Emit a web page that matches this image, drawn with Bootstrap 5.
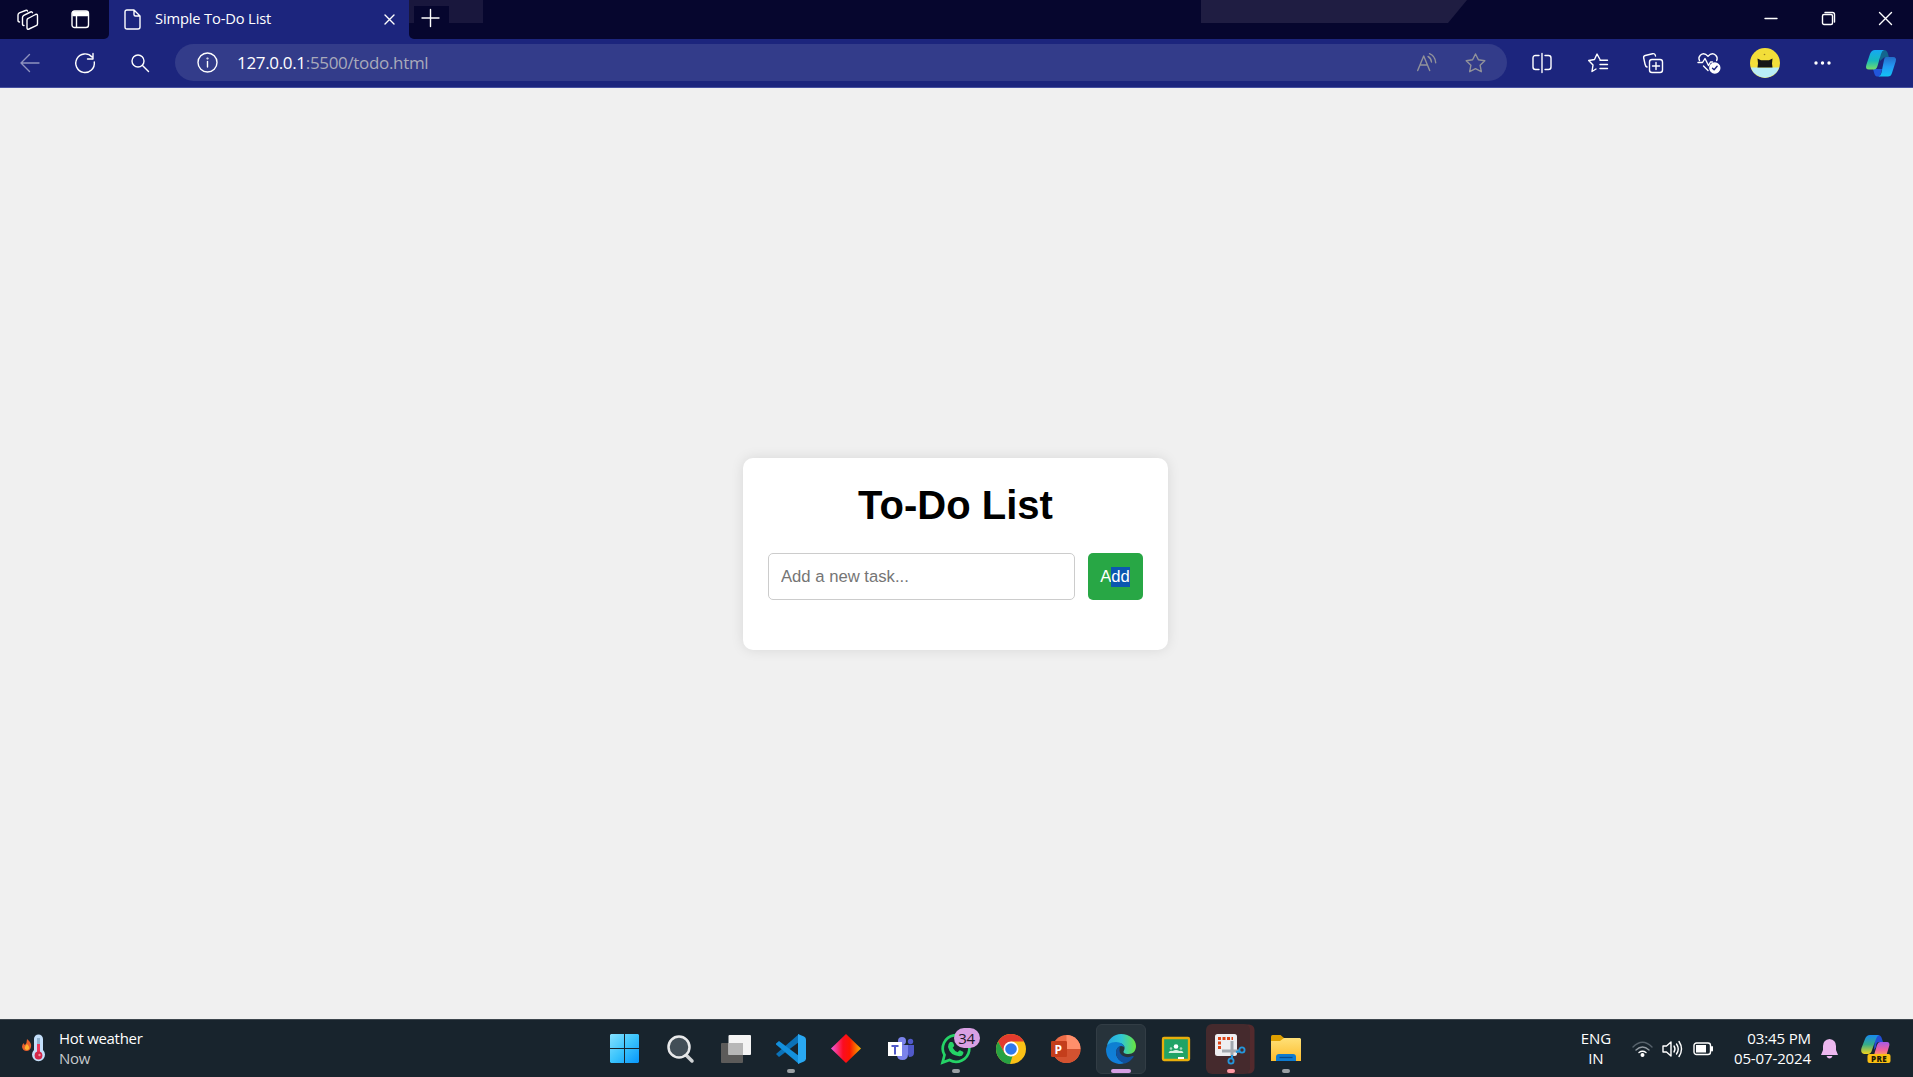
<!DOCTYPE html>
<html lang="en">
<head>
<meta charset="utf-8">
<title>Simple To-Do List</title>
<link href="https://cdn.jsdelivr.net/npm/bootstrap@5.3.0/dist/css/bootstrap.min.css" rel="stylesheet">
<style>
body{font-family:"Open Sans","Noto Sans",sans-serif;color:#fff;background:#f0f0f0;line-height:20px}
svg{display:block;flex:none;overflow:visible}
.ln{fill:none;stroke:#fff;stroke-width:1.4;stroke-linecap:round;stroke-linejoin:round}
.titlebar{height:39px;background:#1c257d}
.strip-l{width:109px;background:#06062e;border-bottom-right-radius:5px;padding-left:17px;gap:32px}
.strip-r{background:#06062e;border-bottom-left-radius:5px}
.shade{left:0;top:0}
.tab{width:300px;padding:0 14px 0 15px;font-size:14.7px}
.tab-name{margin-left:14px;letter-spacing:-.15px;padding-bottom:3px}
.newtab{margin-left:13px;margin-bottom:3px}
.winbtns{padding-bottom:2px;margin-right:-1px}
.winbtn{width:57px}
.toolbar{height:49px;background:#1c257d;border-bottom:1px solid #4650a0;padding-left:2px}
.tslot{width:55px}
.tslot-r{width:55.75px}
.menu-slot{margin-left:2px}
.copilot-slot{margin-left:3px}
.address{height:37px;width:1332px;margin:0 7px 1px 8px;background:#333c8a;border-radius:19px;padding:0 21px 0 22px}
.address-text{margin-left:19px;font-size:17px;letter-spacing:-.33px;color:#a9aaba}
.address-text span{color:#fff}
.viewport{background:#f0f0f0;padding-right:2px}
.todo{width:425px;height:192px;border-radius:10px;padding:25px;background:#fff;box-shadow:0 0 12.5px rgba(0,0,0,.1);font-family:"Liberation Sans",Arial,sans-serif}
.todo h1{font-size:40px;line-height:46px;font-weight:700;color:#000;margin:-1px 0 25px}
.task-field{width:307px;height:47px;border:1px solid #ccc;border-radius:5px;padding:2px 12px 0;font-size:16.67px;color:#000;background:#fff}
.task-field::placeholder{color:#757575;opacity:1}
.add-btn{width:55px;height:47px;background:#28a745;border:0;border-radius:5px;color:#fff;font-size:16.67px;line-height:20px;padding:2px 1px 0 0}
.add-btn span{background:#0b57b0;display:inline-block;height:20px}
.taskbar{height:58px;background:#18242d;border-top:1px solid #3d464d;font-size:15px}
.weather{width:598px;padding-left:22px;letter-spacing:-.3px}
.weather-text{margin-left:14px;padding-bottom:2px}
.app{width:55px}
.app:first-child svg{margin-right:2px}
.appbox{width:50px;height:50px;border-radius:6px}
.appbox-on{background:#27333b;border:1px solid #323d45}
.appbox-alert{background:#452a2d;box-shadow:5px 0 0 -0.5px #532a2d;width:44px;margin-right:6px}
.pip{width:8px;height:4px;border-radius:2px;background:#9a9fa3;bottom:1px}
.pip-on{width:20px;background:#d69fe4;bottom:0}
.pip-alert{background:#ff9aa5;left:21px}
.count{width:26px;height:20px;border-radius:10px;background:#d9a0e4;color:#201828;left:23px;top:4px;line-height:20px;font-size:15px;letter-spacing:-.4px}
.tray{padding-right:22px;letter-spacing:-.12px}
.tray-text{padding-bottom:2px}
.lang{width:32px;margin-right:19px}
</style>
<script src="https://cdn.jsdelivr.net/npm/bootstrap@5.3.0/dist/js/bootstrap.bundle.min.js"></script>
</head>
<body class="vh-100 d-flex flex-column overflow-hidden">
<header class="titlebar d-flex flex-shrink-0">
  <div class="strip-l d-flex align-items-center">
    <svg width="22" height="20" class="ln"><path d="M11 8.500 18.500 4.500q2-.8 2 1.200v8q0 1.500-1.300 2L12 19q-2 .8-2-1.200V10q0-1 1-1.500M7 15.500q-1.500.3-1.500-1.500V7.500q0-1.500 1.300-2.200L13.500 2q1.500-.6 2 .7M2.500 12Q1 12 1 10.500V5q0-1.500 1.300-2.200L8.500.5q1.500-.5 2 .5"/></svg>
    <svg width="19" height="19" class="ln"><rect x="1" y="1" width="16.500" height="16.500" rx="2.500"/><path d="M2 2h14.500v3.500H2z" fill="#fff"/><path d="M5.500 6v11"/></svg>
  </div>
  <div class="tab d-flex align-items-center">
    <svg width="17" height="21" class="ln"><path d="M3 1h7l6 6v11q0 2-2 2H3q-2 0-2-2V3q0-2 2-2zM10 1v4.500q0 1.500 1.500 1.500H16"/></svg>
    <span class="tab-name text-nowrap">Simple To-Do List</span>
    <svg width="11" height="11" class="ln ms-auto"><path d="m1 1 9 9M10 1l-9 9"/></svg>
  </div>
  <div class="strip-r flex-grow-1 d-flex align-items-center position-relative">
    <svg class="shade position-absolute" width="1100" height="39"><path d="M0 0h74v23H40V6H5v17H0z" fill="#19173d"/><path d="M792 0h266l-19 23H792z" fill="#1f1d42"/></svg>
    <svg width="18" height="18" class="ln newtab position-relative"><path d="M0 9h17M8.500.500v17"/></svg>
    <div class="winbtns d-flex ms-auto align-items-center">
      <div class="winbtn d-flex justify-content-center"><svg width="13" height="13" class="ln"><path d="M0 6.500h12"/></svg></div>
      <div class="winbtn d-flex justify-content-center"><svg width="13" height="13" class="ln"><rect x=".5" y="2.500" width="10" height="10" rx="1.500"/><path d="M3 .5h7.500q2 0 2 2V10"/></svg></div>
      <div class="winbtn d-flex justify-content-center"><svg width="13" height="13" class="ln"><path d="m.5.500 12 12m0-12-12 12"/></svg></div>
    </div>
  </div>
</header>
<nav class="toolbar d-flex align-items-center flex-shrink-0">
  <div class="tslot d-flex justify-content-center"><svg width="20" height="18" class="ln opacity-50"><path d="M19 9H1m8.500-8.500L1 9l8.500 8.500"/></svg></div>
  <div class="tslot d-flex justify-content-center"><svg width="20" height="20" class="ln"><path d="M17 4A9.300 9.300 0 1 0 19.300 9M18 .5v5.500h-5.500"/></svg></div>
  <div class="tslot d-flex justify-content-center"><svg width="18" height="18" class="ln"><circle cx="7" cy="7" r="6"/><path d="m11.500 11.500 6 6"/></svg></div>
  <div class="address d-flex align-items-center">
    <svg width="21" height="21" class="ln"><circle cx="10.500" cy="10.500" r="9.500"/><path d="M10.500 9.500v5.500"/><circle cx="10.500" cy="6.500" r=".4"/></svg>
    <span class="address-text"><span>127.0.0.1</span>:5500/todo.html</span>
    <svg width="20" height="19" class="ln ms-auto me-4" style="stroke:#91929a"><path d="M.7 17.500 6.700 3l6 14.500M3 12h7.500M11 3.500q3 1.500 3.500 5.500M12.500.7q5.500 2 6.200 9"/></svg>
    <svg width="21" height="20" class="ln ms-1" style="stroke:#91929a"><path d="m10.500 1 2.900 5.800 6.400.9-4.700 4.500 1.200 6.500-5.800-3-5.800 3 1.200-6.500L1.200 7.700l6.400-.9z"/></svg>
  </div>
  <div class="tslot-r d-flex justify-content-center"><svg width="20" height="20" class="ln"><path d="M7 2.500H3.500Q1 2.500 1 5v9q0 2.500 2.500 2.500H7M13 2.500h3.500Q19 2.500 19 5v9q0 2.500-2.500 2.500H13M10 .5v19"/></svg></div>
  <div class="tslot-r d-flex justify-content-center"><svg width="20" height="20" class="ln"><path d="M12 6.500 9 1 6.500 6.500.7 7.500 5 12l-1 6.500 4-2.500M12 7.200h7.500M12 11.500h7.500M12 15.500h7.500"/></svg></div>
  <div class="tslot-r d-flex justify-content-center"><svg width="20" height="20" class="ln"><path d="M4 14Q2.500 13.500 2 11L.7 5q-.4-2 1.500-2.500L9.500.7Q12 .2 12.500 3"/><rect x="6.500" y="6.500" width="13" height="13" rx="2.500"/><path d="M13 9.500v7M9.500 13h7"/></svg></div>
  <div class="tslot-r d-flex justify-content-center"><svg width="22" height="21" class="ln"><path d="m10 17.500-4.500-4.500M1.500 7.500Q0 4.500 2.300 2.200q3.700-3.200 7.700 1 4-4.200 7.700-1Q20 4.500 18.700 7.500M0 9.500h4.500L7 5.500l3.500 7 2-3.500h2"/><circle cx="16.800" cy="15" r="5" fill="#fff"/><path d="m14.500 15.200 1.600 1.600 3-3.600" stroke="#1c257d"/></svg></div>
  <div class="tslot-r d-flex justify-content-center"><svg width="30" height="30" viewBox="0 0 30 30"><circle cx="15" cy="15" r="15" fill="#f3de39"/><path d="M.8 19.500h28.400a15 15 0 0 1-28.400 0z" fill="#b9edf7"/><path d="m7.500 10.500 3.500 1.800h8l3.500-1.800-.5 5 .5 4H7.500l.5-4z" fill="#161616"/><circle cx="14.500" cy="6.500" r=".8" fill="#987d23"/></svg></div>
  <div class="tslot-r menu-slot d-flex justify-content-center"><svg width="17" height="4" fill="#fff"><circle cx="2" cy="2" r="1.700"/><circle cx="8.500" cy="2" r="1.700"/><circle cx="15" cy="2" r="1.700"/></svg></div>
  <div class="tslot-r copilot-slot d-flex justify-content-center"><svg width="30" height="27"><defs><linearGradient id="cpA" x2="0" y2="1"><stop stop-color="#16a8f5"/><stop offset=".55" stop-color="#17b9bc"/><stop offset="1" stop-color="#75dc68"/></linearGradient><linearGradient id="cpB" x2="0" y2="1"><stop stop-color="#246cc9"/><stop offset=".5" stop-color="#239af5"/><stop offset="1" stop-color="#11c4f3"/></linearGradient></defs><path d="M14 0h4q3 0 4 4l1 3.500h-5L14 11z" fill="#12668e"/><path d="M7 19h9l-2 7.500h-3q-2 0-3-4z" fill="#2156dc"/><path d="M9 0h9q-2 .5-3 4l-3.500 12q-1 3.500-4 3.500H3Q-1 19.500.3 15L4 4Q5.500 0 9 0z" fill="url(#cpA)"/><path d="M20 7h7q4 0 2.700 4.500L26 23q-1 3.500-4 3.500H12q2.500 0 3.500-4L18 10q.5-3 2-3z" fill="url(#cpB)"/></svg></div>
</nav>
<main class="viewport flex-grow-1 d-flex align-items-center justify-content-center">
  <div class="todo">
    <h1 class="text-center">To-Do List</h1>
    <div class="d-flex justify-content-between">
      <input class="task-field" type="text" placeholder="Add a new task...">
      <button class="add-btn" type="button">A<span>dd</span></button>
    </div>
  </div>
</main>
<footer class="taskbar d-flex align-items-center flex-shrink-0">
  <div class="weather d-flex align-items-center flex-shrink-0">
    <svg width="23" height="29"><path d="M5 5q5 4 4 8-1 4-4.500 4T0 13q0-3 2-4 0 2 1 2 2-2 2-6z" fill="#e8602c"/><path d="M5 10q3 3 2 5-2 2-4 0-1-2 2-5z" fill="#ffb02e"/><path d="M12 5a4.500 4.500 0 0 1 9 0v11a6.500 6.500 0 1 1-9 0z" fill="#c4dffa"/><path d="M15 4h3v8h-3z" fill="#8fb3cf"/><path d="M15 10h3v8h-3z" fill="#ee365b"/><circle cx="16.500" cy="21.500" r="3.900" fill="#d22749"/><circle cx="17.500" cy="21" r="1.200" fill="#f490a0"/></svg>
    <div class="weather-text"><div>Hot weather</div><div style="color:#c5c9cc">Now</div></div>
  </div>
  <div class="d-flex flex-shrink-0">
    <div class="app d-flex justify-content-center"><div class="appbox d-flex align-items-center justify-content-center"><svg width="29" height="29"><defs><linearGradient id="win" gradientUnits="userSpaceOnUse" x2="29" y2="29"><stop stop-color="#86e1ff"/><stop offset=".5" stop-color="#3bc4fc"/><stop offset="1" stop-color="#0796fb"/></linearGradient></defs><path d="M1 0h13v14H0V1zM15 0h13l1 1v13H15zM0 15h14v14H1l-1-1zM15 15h14v13l-1 1H15z" fill="url(#win)"/></svg></div></div>
    <div class="app d-flex justify-content-center"><div class="appbox d-flex align-items-center justify-content-center"><svg width="27" height="28"><path d="m19 20 6 6" stroke="#d1d4d6" stroke-width="3.500" stroke-linecap="round"/><circle cx="12" cy="12" r="10.500" fill="#424e57" stroke="#e8e9ea" stroke-width="2.500"/></svg></div></div>
    <div class="app d-flex justify-content-center"><div class="appbox d-flex align-items-center justify-content-center"><svg width="30" height="28"><rect y="8" width="22" height="20" rx="1" fill="#5c5b5a"/><rect x="7.500" width="22.500" height="20" rx="1" fill="#f4f4f4"/><path d="M7.500 8H22v12H7.500z" fill="#b7b7b7"/></svg></div></div>
    <div class="app d-flex justify-content-center"><div class="appbox d-flex align-items-center justify-content-center position-relative"><svg width="30" height="30"><path d="m0 20 3 3L23 8V0z" fill="#0b72b8"/><path d="M0 9.500 3 7l20 15v8L0 10.500z" fill="#1390dd"/><path d="m22 0 6 2.500q2 1 2 3v19q0 2-2 3L22 30z" fill="#29a8f2"/></svg><i class="pip position-absolute"></i></div></div>
    <div class="app d-flex justify-content-center"><div class="appbox d-flex align-items-center justify-content-center"><svg width="30" height="29"><defs><linearGradient id="dia"><stop stop-color="#f35bdf"/><stop offset=".4" stop-color="#fb0c22"/><stop offset=".62" stop-color="#fd1600"/><stop offset="1" stop-color="#f5b300"/></linearGradient></defs><path d="m15 0 15 14.500L15 29 0 14.500z" fill="url(#dia)"/></svg></div></div>
    <div class="app d-flex justify-content-center"><div class="appbox d-flex align-items-center justify-content-center"><svg width="26" height="24"><circle cx="14" cy="4" r="4" fill="#7b83eb"/><circle cx="22.500" cy="4.500" r="2.700" fill="#5059c9"/><path d="M16 8h10v8q0 4-5 4z" fill="#5059c9"/><path d="M10 8h10v9q0 6-5.500 6T9 18z" fill="#7b83eb"/><path d="M0 5h14v14H0z" fill="#fff"/><path d="M3.500 8h7v2H8v7.500H6V10H3.500z" fill="#5059c9"/></svg></div></div>
    <div class="app d-flex justify-content-center"><div class="appbox d-flex align-items-center justify-content-center position-relative"><svg width="30" height="30"><path d="m1.500 28.500 2-7.500a13.300 13.300 0 1 1 5 5z" fill="none" stroke="#25d366" stroke-width="2.700"/><path d="M9 8h2q1 0 1.500 1.500l.7 2q0 1-1.500 2.200 1.800 3.300 5 4.500 1.500-2 2.300-2l3 1.500q.8.5.2 2-1 2.800-4 2.500Q9 21.500 7 13q-.2-3 2-5z" fill="#25d366"/></svg><i class="pip position-absolute"></i><span class="count position-absolute text-center">34</span></div></div>
    <div class="app d-flex justify-content-center"><div class="appbox d-flex align-items-center justify-content-center"><svg width="30" height="30"><circle cx="15" cy="15" r="15" fill="#fbc116"/><path d="M2 7.500A15 15 0 0 1 28 7.500H15L8.500 19z" fill="#e33b2e"/><path d="M2 7.500 8.500 19q3 4 8 3L14 30A15 15 0 0 1 2 7.500z" fill="#27a243"/><circle cx="15" cy="15" r="7.500" fill="#fff"/><circle cx="15" cy="15" r="5.800" fill="#2f78eb"/></svg></div></div>
    <div class="app d-flex justify-content-center"><div class="appbox d-flex align-items-center justify-content-center"><svg width="30" height="28"><circle cx="15.500" cy="14" r="14" fill="#ed6c47"/><path d="M15.500 0a14 14 0 0 1 14 14h-14z" fill="#ff8f6b"/><path d="M1.500 14h28a14 14 0 0 1-28 0z" fill="#d35230"/><rect y="6" width="16" height="16" rx="1.300" fill="#c43e1c"/><text x="3.500" y="18.500" font-size="12" font-weight="700" fill="#fff">P</text></svg></div></div>
    <div class="app d-flex justify-content-center"><div class="appbox appbox-on d-flex align-items-center justify-content-center position-relative"><svg width="30" height="30"><defs><linearGradient id="edA"><stop stop-color="#24a7e7"/><stop offset=".5" stop-color="#30c6d5"/><stop offset="1" stop-color="#69e63c"/></linearGradient><linearGradient id="edB" x2="0" y2="1"><stop stop-color="#0d7fd0"/><stop offset="1" stop-color="#127fdd"/></linearGradient></defs><path d="M1 12C2 5 8 0 15 0c9 0 15 6 15 12 0 5-3 8-7.500 8-4 0-6-1.500-4.500-3.500 2-4-1-7.500-6-7.500Q4 9 1 12z" fill="url(#edA)"/><path d="M0 15q1-7 10-7 7 0 9 6-1-2-4-2-5 1-5 7 0 7 9 10-3 1-6 1Q0 28 0 15z" fill="url(#edB)"/><path d="M14 12q-4 2-4 7 1 8 9 10.500 5-1.500 8.500-6.500.5-1.500-1-1-4 2-8 .5-5-2-5-6 0-3 .5-4.500z" fill="#11519e"/></svg><i class="pip pip-on position-absolute"></i></div></div>
    <div class="app d-flex justify-content-center"><div class="appbox d-flex align-items-center justify-content-center"><svg width="28" height="24"><rect x="1" y="1" width="26" height="22" rx="1" fill="#21a366" stroke="#e8ae0b" stroke-width="2.300"/><circle cx="14" cy="9.500" r="2.300" fill="#fff"/><circle cx="9" cy="11.500" r="1.300" fill="#a6dabb"/><circle cx="19" cy="11.500" r="1.300" fill="#a6dabb"/><path d="M6.500 16q1-3 4-2 3.500-2 7 0 3-1 4 2z" fill="#d8f0e2"/><path d="M16 20h6v2h-6z" fill="#fff"/></svg></div></div>
    <div class="app d-flex justify-content-center"><div class="appbox appbox-alert d-flex align-items-center justify-content-center position-relative"><svg width="30" height="30" class="ms-1"><rect width="22" height="22" rx="2.500" fill="#eeeef1"/><path d="M4.500 15V4.500H18" fill="none" stroke="#dd4215" stroke-width="3" stroke-dasharray="3 1.500"/><path d="M17 7v15M7 17h17" stroke="#a3a9b0" stroke-width="3"/><circle cx="27" cy="16" r="2.600" fill="none" stroke="#2397dc" stroke-width="1.800"/><circle cx="16" cy="27" r="2.600" fill="none" stroke="#2397dc" stroke-width="1.800"/><path d="m21 18 4-1M17 21v3" stroke="#2397dc" stroke-width="2"/></svg><i class="pip pip-alert position-absolute"></i></div></div>
    <div class="app d-flex justify-content-center"><div class="appbox d-flex align-items-center justify-content-center position-relative"><svg width="30" height="27"><defs><linearGradient id="fld" x2="0" y2="1"><stop stop-color="#ffe078"/><stop offset="1" stop-color="#fdbd2c"/></linearGradient></defs><path d="M0 1.500Q0 0 1.500 0h8L13 3v6H0z" fill="#dfa000"/><path d="M0 6h9l4-3h16l1 1v22H0z" fill="url(#fld)"/><path d="M5 26v-4q0-3 3-3h14q3 0 3 3v4z" fill="#0d7bd0"/><path d="M8.500 22.500h13" stroke="#074a8b" stroke-width="1.300"/></svg><i class="pip position-absolute"></i></div></div>
  </div>
  <div class="tray d-flex align-items-center ms-auto">
    <div class="lang tray-text text-center"><div>ENG</div><div>IN</div></div>
    <svg width="24" height="18" class="ln" style="margin-right:7px"><path d="M2 7q9.500-9.500 19 0" stroke="#56616a"/><path d="M5 10q6.500-6 13 0" stroke="#949ca3"/><path d="M8 12.500q3.500-2.500 7 0"/><circle cx="11.500" cy="15" r="1.300" fill="#fff"/></svg>
    <svg width="21" height="18" class="ln" style="margin-right:10px"><path d="M1 6h3.500L9 2v14l-4.500-4H1zM12 6q2 3 0 6M14.500 4q3.500 5 0 10M17 1.500q5 7.500 0 15"/></svg>
    <svg width="21" height="14" class="ln" style="margin-right:20px"><rect x="1" y="1" width="16.500" height="11.500" rx="2.500"/><rect x="3" y="3" width="10" height="7.500" fill="#fff" stroke="none"/><path d="M19 5v3.500" stroke-width="2"/></svg>
    <div class="tray-text text-end text-nowrap"><div>03:45 PM</div><div>05-07-2024</div></div>
    <svg width="17" height="20" style="margin:0 23px 0 10px"><path d="M8.500 0Q15 1 15 7v4l2 5H0l2-5V7Q2 1 8.500 0zM5.500 17h6q-1 2.500-3 2.500t-3-2.500z" fill="#edb8ef"/></svg>
    <svg width="30" height="28"><defs><linearGradient id="pvA" x2="0" y2="1"><stop stop-color="#1789ef"/><stop offset=".5" stop-color="#36ad88"/><stop offset="1" stop-color="#f0d51d"/></linearGradient><linearGradient id="pvB" x2="0" y2="1"><stop stop-color="#a65ae6"/><stop offset=".6" stop-color="#f0629e"/><stop offset="1" stop-color="#ff9a62"/></linearGradient></defs><path d="M14 0h3q3 0 4 4l1 3h-4q-3 0-3 5l-2 3z" fill="#234ed4"/><path d="M9 0h9q-2 1-3 4l-4 11q-1 4-4 4H3q-4-1-2.500-6L4 4q1.500-4 5-4z" fill="url(#pvA)"/><path d="M19 7h7q3 0 2.300 3.500L25.500 20H13l3-10q1-3 3-3z" fill="url(#pvB)"/><rect x="6.500" y="19" width="23" height="9" rx="2" fill="#fbbf12"/><text x="10" y="26.500" font-size="8" font-weight="800" letter-spacing=".4" fill="#241c08">PRE</text></svg>
  </div>
</footer>
</body>
</html>
